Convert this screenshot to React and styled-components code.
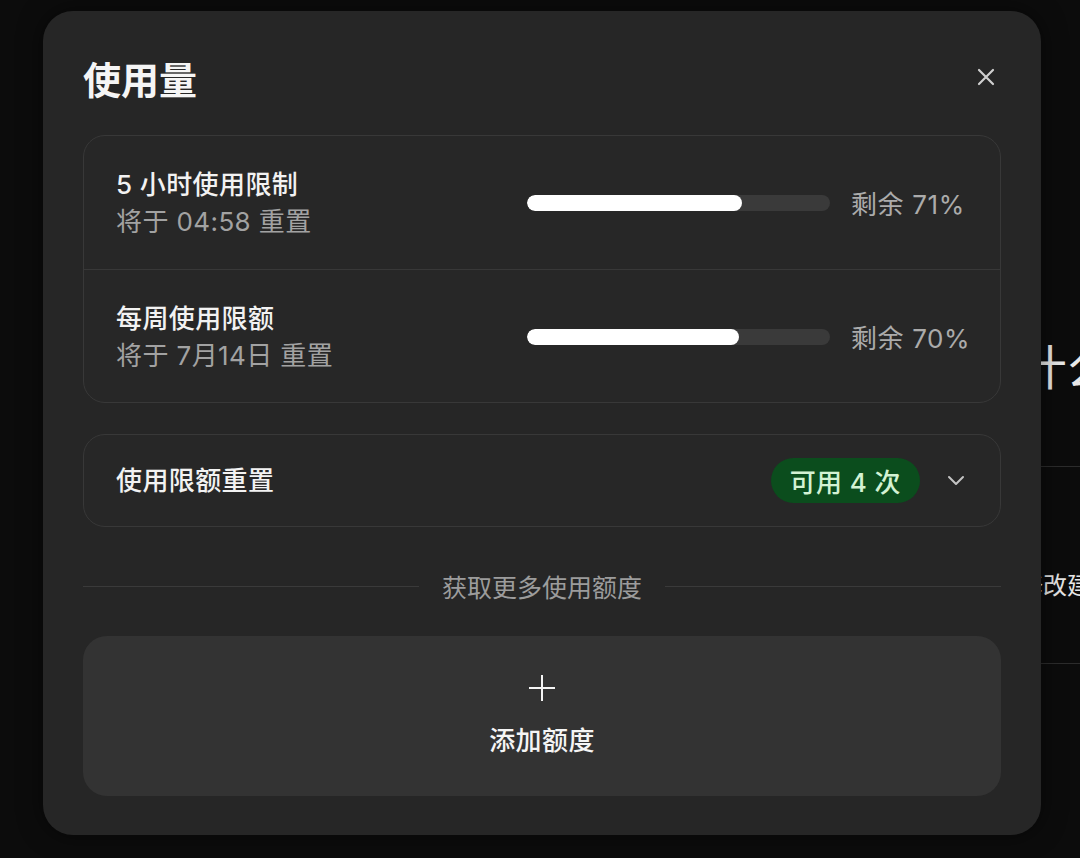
import React from "react";
import styled, { createGlobalStyle } from "styled-components";

const GlobalStyle = createGlobalStyle`
  html, body {
    margin: 0;
    padding: 0;
    background: #0c0c0c;
  }
  body {
    font-family: "Inter", "Noto Sans CJK SC", sans-serif;
    color: #f2f2f2;
    -webkit-font-smoothing: antialiased;
  }
`;

const Page = styled.div`
  position: relative;
  width: 1080px;
  height: 858px;
  overflow: hidden;
  background: #0c0c0c;
`;

// page content that sits behind the dialog
const BackColumn = styled.div`
  margin-left: 1019px;
  padding-top: 336px;
  width: 600px;
`;

const BackHeading = styled.h1`
  margin: 0 0 66px;
  font-size: 48px;
  line-height: 64px;
  font-weight: 400;
  color: #e8e8e8;
  white-space: nowrap;
`;

const BackRow = styled.div`
  height: 198px;
  border-top: 1px solid #2c2c2c;
  border-bottom: 1px solid #2c2c2c;
  padding-top: 103px;
  box-sizing: border-box;
`;

const BackText = styled.div`
  font-size: 24px;
  line-height: 32px;
  color: #e6e6e6;
  white-space: nowrap;
`;

const Overlay = styled.div`
  position: absolute;
  inset: 0;
  padding: 11px 39px 23px 43px;
  display: flex;
`;

const Modal = styled.div`
  flex: 1;
  background: #262626;
  border-radius: 30px;
  padding: 40px 40px 39px 40px;
  display: flex;
  flex-direction: column;
  box-shadow: 0 0 24px rgba(0, 0, 0, 0.5);
`;

const Header = styled.div`
  height: 52px;
  display: flex;
  align-items: center;
  justify-content: space-between;
`;

const Title = styled.h2`
  margin: 0;
  font-size: 38px;
  font-weight: 600;
  color: #f5f5f5;
`;

const CloseBtn = styled.button`
  width: 30px;
  height: 30px;
  padding: 0;
  border: none;
  background: transparent;
  display: flex;
  align-items: center;
  justify-content: center;
  color: #cfcfcf;
  cursor: pointer;
`;

const Card = styled.div`
  margin-top: ${(p) => p.$mt || 0}px;
  border: 1px solid #383838;
  border-radius: 22px;
  background: #272727;
  overflow: hidden;
`;

const UsageRow = styled.div`
  height: 133px;
  padding: 0 31px 0 32px;
  display: flex;
  align-items: center;
  & + & {
    border-top: 1px solid #383838;
  }
`;

const Info = styled.div`
  flex: 1;
  display: flex;
  flex-direction: column;
`;

const RowTitle = styled.div`
  font-size: 26px;
  letter-spacing: 0.4px;
  line-height: 37px;
  font-weight: 500;
  color: #f2f2f2;
`;

const RowSub = styled.div`
  font-size: 26px;
  letter-spacing: 0.4px;
  line-height: 37px;
  color: #a2a2a2;
`;

const Track = styled.div`
  width: 303px;
  height: 16px;
  border-radius: 8px;
  background: #3a3a3a;
  overflow: hidden;
`;

const Fill = styled.div`
  height: 100%;
  border-radius: 8px;
  background: #ffffff;
`;

const Percent = styled.div`
  width: 118px;
  margin-left: 21px;
  font-size: 26px;
  letter-spacing: 0.6px;
  color: #ababab;
  white-space: nowrap;
`;

const ResetRow = styled.div`
  height: 91px;
  padding: 0 35px 0 32px;
  display: flex;
  align-items: center;
`;

const Badge = styled.span`
  height: 45px;
  padding: 0 19px;
  border-radius: 23px;
  background: #0b4d1d;
  color: #d3f2d3;
  font-size: 26px;
  letter-spacing: 0.4px;
  font-weight: 500;
  display: flex;
  align-items: center;
  white-space: nowrap;
`;

const Chevron = styled.span`
  margin-left: 27px;
  display: flex;
  color: #c4c4c4;
`;

const Divider = styled.div`
  margin-top: 42px;
  height: 34px;
  display: flex;
  align-items: center;
  gap: 23px;
  &::before,
  &::after {
    content: "";
    flex: 1;
    height: 1px;
    background: #3a3a3a;
  }
`;

const DividerLabel = styled.span`
  font-size: 25px;
  color: #9c9c9c;
  white-space: nowrap;
`;

const AddButton = styled.button`
  margin-top: 33px;
  height: 160px;
  border: none;
  border-radius: 24px;
  background: #333333;
  color: #f5f5f5;
  display: flex;
  flex-direction: column;
  align-items: center;
  justify-content: center;
  gap: 22px;
  font-family: inherit;
  cursor: pointer;
`;

const AddLabel = styled.span`
  font-size: 26px;
  letter-spacing: 0.4px;
  font-weight: 500;
  line-height: 34px;
`;

const usage = [
  { title: "5 小时使用限制", sub: "将于 04:58 重置", left: 71 },
  { title: "每周使用限额", sub: "将于 7月14日 重置", left: 70 },
];

export default function App() {
  return (
    <>
      <GlobalStyle />
      <Page>
        <BackColumn>
          <BackHeading>什么</BackHeading>
          <BackRow>
            <BackText>修改建议</BackText>
          </BackRow>
        </BackColumn>

        <Overlay>
          <Modal>
            <Header>
              <Title>使用量</Title>
              <CloseBtn aria-label="关闭">
                <svg width="18" height="18" viewBox="0 0 18 18">
                  <path
                    d="M2 2 L16 16 M16 2 L2 16"
                    stroke="currentColor"
                    strokeWidth="2.2"
                    strokeLinecap="round"
                  />
                </svg>
              </CloseBtn>
            </Header>

            <Card $mt={32}>
              {usage.map((u) => (
                <UsageRow key={u.title}>
                  <Info>
                    <RowTitle>{u.title}</RowTitle>
                    <RowSub>{u.sub}</RowSub>
                  </Info>
                  <Track>
                    <Fill style={{ width: `${u.left}%` }} />
                  </Track>
                  <Percent>剩余 {u.left}%</Percent>
                </UsageRow>
              ))}
            </Card>

            <Card $mt={31}>
              <ResetRow>
                <Info>
                  <RowTitle>使用限额重置</RowTitle>
                </Info>
                <Badge>可用 4 次</Badge>
                <Chevron>
                  <svg width="18" height="11" viewBox="0 0 18 11">
                    <path
                      d="M2 2 L9 9 L16 2"
                      fill="none"
                      stroke="currentColor"
                      strokeWidth="2"
                      strokeLinecap="round"
                      strokeLinejoin="round"
                    />
                  </svg>
                </Chevron>
              </ResetRow>
            </Card>

            <Divider>
              <DividerLabel>获取更多使用额度</DividerLabel>
            </Divider>

            <AddButton>
              <svg width="28" height="28" viewBox="0 0 28 28">
                <path
                  d="M14 1 V27 M1 14 H27"
                  stroke="currentColor"
                  strokeWidth="2"
                />
              </svg>
              <AddLabel>添加额度</AddLabel>
            </AddButton>
          </Modal>
        </Overlay>
      </Page>
    </>
  );
}
